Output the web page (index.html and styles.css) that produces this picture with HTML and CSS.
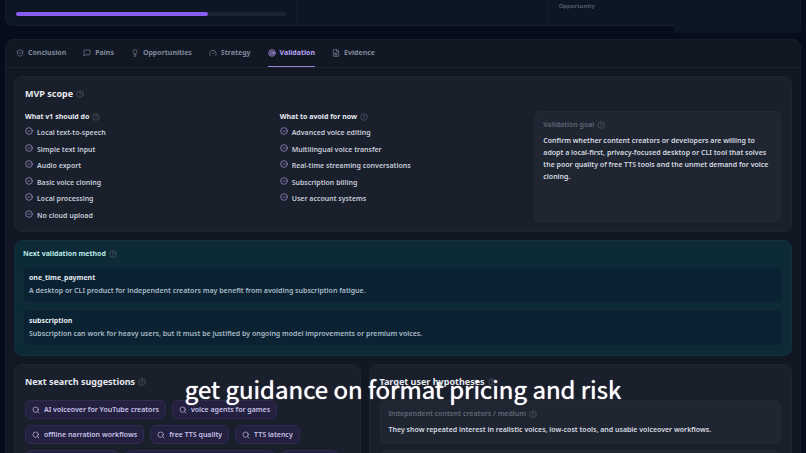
FILE: index.html
```
<!DOCTYPE html>
<html lang="en">
<head>
  <meta charset="UTF-8">
  <meta name="viewport" content="width=device-width, initial-scale=1.0">
  <title>Validation</title>
  <link rel="stylesheet" href="styles.css">
</head>
<body>
  <!-- icon set -->
  <svg class="sprite" aria-hidden="true">
    <symbol id="help" viewBox="0 0 24 24"><circle cx="12" cy="12" r="10"/><path d="M9 9a3 3 0 0 1 6 1c0 2-3 2.500-3 4M12 17v.5"/></symbol>
    <symbol id="check" viewBox="0 0 24 24"><circle cx="12" cy="12" r="10"/><path d="M8.500 12l2.500 2.500 4.500-4.500"/></symbol>
    <symbol id="search" viewBox="0 0 24 24"><circle cx="11" cy="11" r="8"/><path d="M21 21l-4.300-4.300"/></symbol>
    <symbol id="shield" viewBox="0 0 24 24"><path d="M20 13c0 5-3.500 7.500-8 9-4.500-1.500-8-4-8-9V6c3 0 5.500-1.500 8-4 2.500 2.500 5 4 8 4z"/><path d="M9 12l2 2 4-4"/></symbol>
    <symbol id="message" viewBox="0 0 24 24"><path d="M21 15a2 2 0 0 1-2 2H7l-4 4V5a2 2 0 0 1 2-2h14a2 2 0 0 1 2 2z"/></symbol>
    <symbol id="bulb" viewBox="0 0 24 24"><path d="M15 14c.2-1 .7-1.700 1.500-2.500C17.500 10.500 18 9.300 18 8A6 6 0 0 0 6 8c0 1.300.5 2.500 1.500 3.500.8.8 1.300 1.500 1.500 2.500zM9 18h6M10 22h4"/></symbol>
    <symbol id="gauge" viewBox="0 0 24 24"><path d="M12 14l4-4M3.300 19a10 10 0 1 1 17.400 0"/></symbol>
    <symbol id="target" viewBox="0 0 24 24"><circle cx="12" cy="12" r="10"/><circle cx="12" cy="12" r="6"/><circle cx="12" cy="12" r="2"/></symbol>
    <symbol id="file" viewBox="0 0 24 24"><path d="M15 2H6a2 2 0 0 0-2 2v16a2 2 0 0 0 2 2h12a2 2 0 0 0 2-2V7zM14 2v6h6M9 12v6h6v-4h-6"/></symbol>
  </svg>

  <header class="summary">
    <div class="summary-cell">
      <div class="progress"><div class="progress-fill" style="width: 71%"></div></div>
    </div>
    <div class="summary-cell"></div>
    <div class="summary-cell summary-label">Opportunity</div>
    <div class="summary-foot"></div>
  </header>

  <main class="panel">
    <nav class="tabs">
      <button class="tab"><svg class="icon"><use href="#shield"/></svg>Conclusion</button>
      <button class="tab"><svg class="icon"><use href="#message"/></svg>Pains</button>
      <button class="tab"><svg class="icon"><use href="#bulb"/></svg>Opportunities</button>
      <button class="tab"><svg class="icon"><use href="#gauge"/></svg>Strategy</button>
      <button class="tab active"><svg class="icon"><use href="#target"/></svg>Validation</button>
      <button class="tab"><svg class="icon"><use href="#file"/></svg>Evidence</button>
    </nav>

    <div class="content">
      <!-- MVP scope -->
      <section class="card">
        <h2>MVP scope <svg class="icon help"><use href="#help"/></svg></h2>
        <div class="scope">
          <div class="scope-col">
            <h3>What v1 should do <svg class="icon help"><use href="#help"/></svg></h3>
            <ul class="checks">
              <li><svg class="icon"><use href="#check"/></svg>Local text-to-speech</li>
              <li><svg class="icon"><use href="#check"/></svg>Simple text input</li>
              <li><svg class="icon"><use href="#check"/></svg>Audio export</li>
              <li><svg class="icon"><use href="#check"/></svg>Basic voice cloning</li>
              <li><svg class="icon"><use href="#check"/></svg>Local processing</li>
              <li><svg class="icon"><use href="#check"/></svg>No cloud upload</li>
            </ul>
          </div>
          <div class="scope-col">
            <h3>What to avoid for now <svg class="icon help"><use href="#help"/></svg></h3>
            <ul class="checks">
              <li><svg class="icon"><use href="#check"/></svg>Advanced voice editing</li>
              <li><svg class="icon"><use href="#check"/></svg>Multilingual voice transfer</li>
              <li><svg class="icon"><use href="#check"/></svg>Real-time streaming conversations</li>
              <li><svg class="icon"><use href="#check"/></svg>Subscription billing</li>
              <li><svg class="icon"><use href="#check"/></svg>User account systems</li>
            </ul>
          </div>
          <div class="box">
            <h4>Validation goal <svg class="icon help"><use href="#help"/></svg></h4>
            <p>Confirm whether content creators or developers are willing to adopt a local-first, privacy-focused desktop or CLI tool that solves the poor quality of free TTS tools and the unmet demand for voice cloning.</p>
          </div>
        </div>
      </section>

      <!-- Next validation method -->
      <section class="card methods">
        <h3>Next validation method <svg class="icon help"><use href="#help"/></svg></h3>
        <div class="method">
          <h3>one_time_payment</h3>
          <p>A desktop or CLI product for independent creators may benefit from avoiding subscription fatigue.</p>
        </div>
        <div class="method">
          <h3>subscription</h3>
          <p>Subscription can work for heavy users, but it must be justified by ongoing model improvements or premium voices.</p>
        </div>
      </section>

      <div class="bottom">
        <section class="card">
          <h2>Next search suggestions <svg class="icon help"><use href="#help"/></svg></h2>
          <div class="chips">
            <button class="chip"><svg class="icon"><use href="#search"/></svg>AI voiceover for YouTube creators</button>
            <button class="chip"><svg class="icon"><use href="#search"/></svg>voice agents for games</button>
            <button class="chip"><svg class="icon"><use href="#search"/></svg>offline narration workflows</button>
            <button class="chip"><svg class="icon"><use href="#search"/></svg>free TTS quality</button>
            <button class="chip"><svg class="icon"><use href="#search"/></svg>TTS latency</button>
          </div>
          <div class="chips-more"><span class="chip"></span><span class="chip"></span><span class="chip"></span></div>
        </section>
        <section class="card">
          <h2>Target user hypotheses <svg class="icon help"><use href="#help"/></svg></h2>
          <div class="box">
            <h4>Independent content creators / medium <svg class="icon help"><use href="#help"/></svg></h4>
            <p>They show repeated interest in realistic voices, low-cost tools, and usable voiceover workflows.</p>
          </div>
          <div class="box"></div>
        </section>
      </div>
    </div>
  </main>

  <div class="caption">get guidance on format pricing and risk</div>
</body>
</html>
```

FILE: styles.css
```
* {
  box-sizing: border-box;
}
body {
  margin: 0;
  height: 100vh;
  overflow: hidden;
  padding: 0 5px;
  background: #060c19;
  color: #c6ccd8;
  font-family: "Noto Sans", sans-serif;
  font-size: 7px;
  font-weight: 600;
  line-height: 12px;
}
h2, h3, h4, p, ul {
  margin: 0;
  padding: 0;
}
button {
  font: inherit;
  cursor: pointer;
}
.sprite {
  display: none;
}
.icon {
  width: 8px;
  height: 8px;
  flex: none;
  fill: none;
  stroke: currentColor;
  stroke-width: 2;
  stroke-linecap: round;
  stroke-linejoin: round;
}
.help {
  color: #535a69;
}

/* top summary */
.summary {
  position: relative;
  display: grid;
  grid-template-columns: 291fr 252fr 253fr;
  height: 26px;
  margin-bottom: 13px;
  background: #0d1623;
  border: 1px solid #151e2c;
  border-top: 0;
  border-radius: 0 0 0 8px;
}
.summary-cell {
  padding: 0 10px;
}
.summary-cell + .summary-cell {
  border-left: 1px solid #131c2a;
}
.summary-label {
  color: #5b6475;
  font-size: 6px;
}
.summary-foot {
  position: absolute;
  top: 100%;
  right: -1px;
  width: 16%;
  height: 8px;
  background: #0d1623;
}
.progress {
  height: 4px;
  margin-top: 12px;
  border-radius: 2px;
  background: #1b2233;
}
.progress-fill {
  height: 100%;
  border-radius: 2px;
  background: #8b5cf0;
}

/* main panel */
.panel {
  background: #111723;
  border: 1px solid #171e2b;
  border-radius: 8px 8px 0 0;
}
.tabs {
  display: flex;
  gap: 17px;
  height: 28px;
  padding: 0 10px;
  border-bottom: 1px solid #1a202d;
}
.tab {
  display: flex;
  align-items: center;
  gap: 4px;
  padding: 0;
  border: 0;
  border-bottom: 1px solid transparent;
  background: none;
  color: #7f8999;
  font-weight: 700;
}
.tab.active {
  color: #b9a3f5;
  border-color: #9b82d8;
}
.content {
  display: flex;
  flex-direction: column;
  gap: 8px;
  padding: 8px;
}
.card {
  padding: 11px 10px 9px;
  background: #1a1f2c;
  border: 1px solid #1e2431;
  border-radius: 8px;
}
h2, h3, h4 {
  display: flex;
  align-items: center;
  gap: 3px;
  color: #e6e9ef;
  font-size: 7px;
  font-weight: 700;
}
h2 {
  font-size: 9px;
}
h4 {
  color: #5f6777;
  font-weight: 600;
}
.scope {
  display: grid;
  grid-template-columns: repeat(3, 1fr);
  gap: 8px;
  margin-top: 11px;
}
.scope-col {
  display: flex;
  flex-direction: column;
}
.checks {
  flex: 1;
  display: grid;
  grid-template-rows: repeat(6, 1fr);
  list-style: none;
}
.checks li {
  display: flex;
  gap: 4px;
  padding-top: 4px;
}
.checks .icon {
  color: #a9a0dc;
}
.box {
  min-height: 44px;
  padding: 7px 8px;
  background: #202631;
  border: 1px solid #232935;
  border-radius: 6px;
}
.scope .box {
  min-height: 111px;
}
.box p {
  margin-top: 4px;
  color: #d6dae2;
}

/* validation methods */
.methods {
  display: flex;
  flex-direction: column;
  gap: 6px;
  padding: 7px 8px 9px;
  background: #0d2a37;
  border-color: #162e3d;
}
.methods > h3 {
  color: #b9e8e4;
}
.method {
  padding: 5px;
  background: #0b2232;
  border: 1px solid #122b3a;
  border-radius: 6px;
}
.method p {
  margin-top: 1px;
  color: #a9bac7;
}

/* bottom cards */
.bottom {
  display: grid;
  grid-template-columns: 9fr 11fr;
  gap: 8px;
}
.chips, .chips-more {
  display: flex;
  flex-wrap: wrap;
  gap: 6px;
  margin-top: 12px;
}
.chip {
  display: flex;
  align-items: center;
  gap: 4px;
  height: 19px;
  padding: 0 6px;
  background: #242040;
  border: 1px solid #302b50;
  border-radius: 6px;
  color: #c8c2e8;
}
.chips-more {
  display: grid;
  grid-template-columns: 5fr 8fr 3fr;
  margin-top: 6px;
  padding-right: 12px;
}
.bottom .box {
  margin-top: 12px;
}
.bottom .box + .box {
  margin-top: 6px;
}

/* video caption */
.caption {
  position: absolute;
  left: 0;
  right: 0;
  bottom: 44px;
  color: #fff;
  font-family: "Noto Sans CJK SC", sans-serif;
  font-size: 24px;
  font-weight: 400;
  line-height: 40px;
  text-align: center;
  text-shadow: 0 0 1px #fff;
}
```
